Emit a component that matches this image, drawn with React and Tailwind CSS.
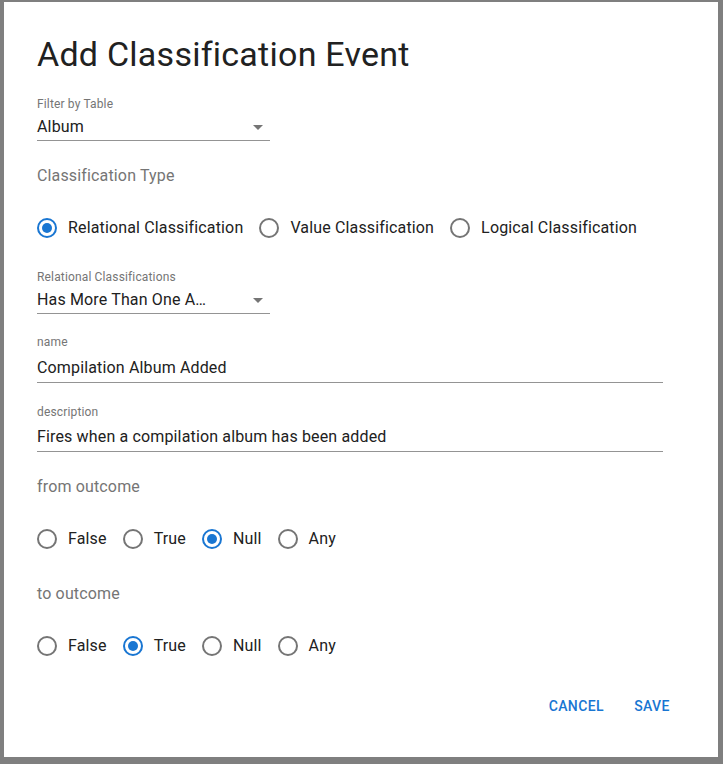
import { useState } from "react";

function RadioIcon({ checked }) {
  return (
    <svg width="24" height="24" viewBox="0 0 24 24">
      <circle cx="12" cy="12" r="9" fill="none" stroke={checked ? "#1976d2" : "#757575"} strokeWidth="2" />
      {checked && <circle cx="12" cy="12" r="5" fill="#1976d2" />}
    </svg>
  );
}

function RadioRow({ options, value, onChange, className }) {
  return (
    <div className={`flex items-center ${className}`}>
      {options.map((opt) => (
        <label key={opt} className="flex items-center mr-4 cursor-pointer" onClick={() => onChange(opt)}>
          <span className="w-[42px] h-[42px] -ml-[11px] flex items-center justify-center">
            <RadioIcon checked={value === opt} />
          </span>
          <span className="text-[16px] leading-[20px] tracking-[0.15px] text-[#212121]">{opt}</span>
        </label>
      ))}
    </div>
  );
}

function Select({ label, value, className }) {
  return (
    <div className={className}>
      <div className="text-[12px] leading-[16px] tracking-[0.15px] text-[#757575]">{label}</div>
      <div className="mt-[5px] w-[233px] pb-[3px] border-b border-[#949494] flex items-center justify-between">
        <span className="text-[16px] leading-[20px] tracking-[0.15px] text-[#212121] whitespace-nowrap">{value}</span>
        <svg width="10" height="5" viewBox="0 0 10 5" className="mr-[7px] mt-[1px]">
          <path d="M0 0l5 5 5-5z" fill="#757575" />
        </svg>
      </div>
    </div>
  );
}

function TextField({ label, value, gap, className }) {
  return (
    <div className={className}>
      <div className="text-[12px] leading-[16px] tracking-[0.15px] text-[#757575]">{label}</div>
      <div className={`${gap} w-[626px] pb-[4px] border-b border-[#949494] text-[16px] leading-[20px] tracking-[0.15px] text-[#212121]`}>
        {value}
      </div>
    </div>
  );
}

export default function App() {
  const [type, setType] = useState("Relational Classification");
  const [from, setFrom] = useState("Null");
  const [to, setTo] = useState("True");
  const outcomes = ["False", "True", "Null", "Any"];

  return (
    <div className="w-[723px] h-[764px] bg-[#7f7f7f] pt-[2px] pl-[4px] font-[Roboto,sans-serif]">
      <div className="w-[714px] h-[755px] bg-white pl-[33px] pt-[32px]">
        <h1 className="text-[34px] leading-[40px] font-normal tracking-[0.25px] text-[#212121]">Add Classification Event</h1>

        <Select label="Filter by Table" value="Album" className="mt-[22px]" />

        <div className="mt-[25px] text-[16px] leading-[20px] tracking-[0.15px] text-[#757575]">Classification Type</div>
        <RadioRow
          className="mt-[21px]"
          options={["Relational Classification", "Value Classification", "Logical Classification"]}
          value={type}
          onChange={setType}
        />

        <Select label="Relational Classifications" value="Has More Than One A…" className="mt-[20px]" />

        <TextField label="name" value="Compilation Album Added" gap="mt-[8px]" className="mt-[20px]" />
        <TextField
          label="description"
          value="Fires when a compilation album has been added"
          gap="mt-[7px]"
          className="mt-[21px]"
        />

        <div className="mt-[25px] text-[16px] leading-[20px] tracking-[0.15px] text-[#757575]">from outcome</div>
        <RadioRow className="mt-[21px]" options={outcomes} value={from} onChange={setFrom} />

        <div className="mt-[24px] text-[16px] leading-[20px] tracking-[0.15px] text-[#757575]">to outcome</div>
        <RadioRow className="mt-[21px]" options={outcomes} value={to} onChange={setTo} />

        <div className="mt-[21px] flex justify-end gap-2 pr-[34px]">
          <button className="min-w-[64px] px-2 py-2 text-[14px] leading-[20px] font-medium uppercase tracking-[0.4px] text-[#1976d2]">
            Cancel
          </button>
          <button className="min-w-[64px] px-2 py-2 text-[14px] leading-[20px] font-medium uppercase tracking-[0.4px] text-[#1976d2]">
            Save
          </button>
        </div>
      </div>
    </div>
  );
}
